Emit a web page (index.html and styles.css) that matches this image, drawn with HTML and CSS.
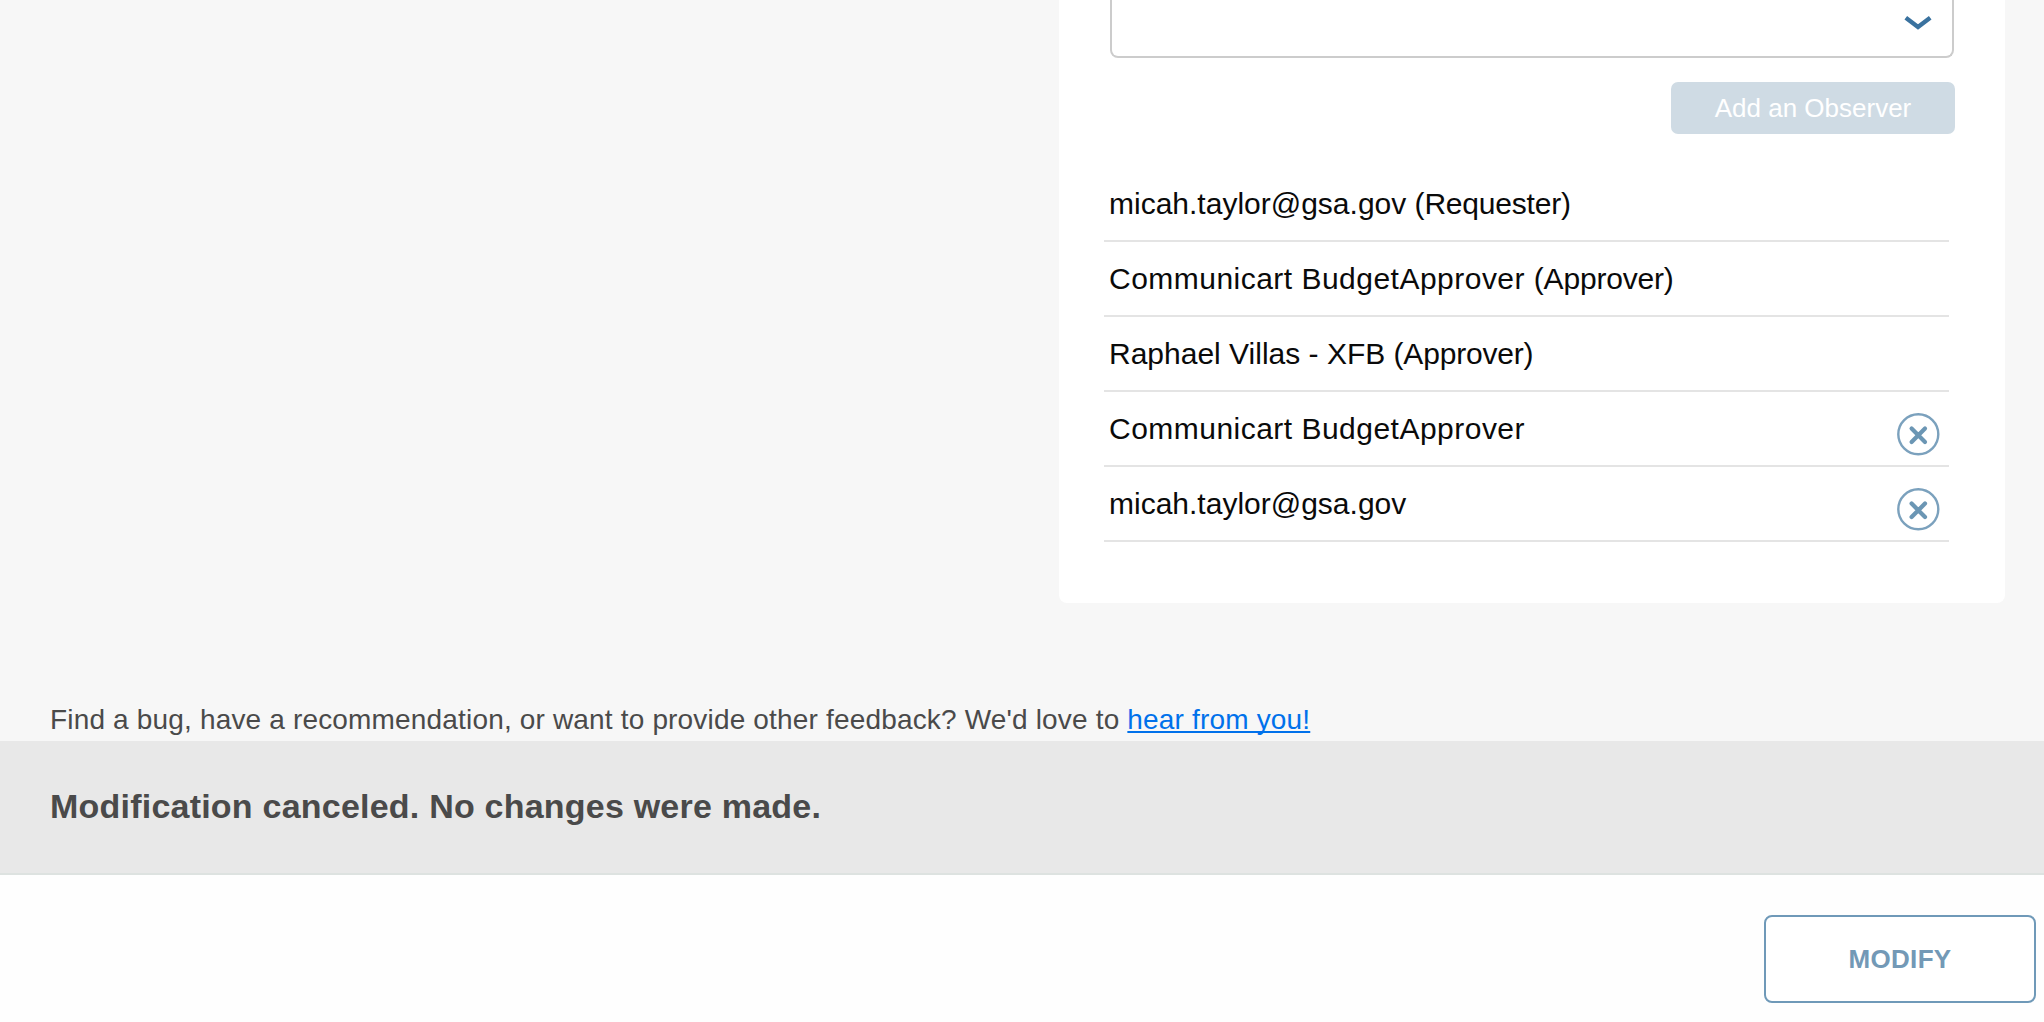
FILE: index.html
```html
<!DOCTYPE html>
<html lang="en">
<head>
<meta charset="utf-8">
<title>Request observers</title>
<link rel="stylesheet" href="styles.css">
</head>
<body>
<main class="content">
  <section class="card">
    <div class="select">
      <svg class="chevron" width="28" height="16" viewBox="0 0 28 16"><path d="M1.8 2.8 14 11.9 26.2 2.8" fill="none" stroke="#3a729f" stroke-width="4.4"/></svg>
    </div>
    <button class="add" type="button" disabled>Add an Observer</button>
    <ul class="observers">
      <li class="row"><span class="name">micah.taylor@gsa.gov <span class="role">(Requester)</span></span></li>
      <li class="row"><span class="name budget">Communicart BudgetApprover <span class="role">(Approver)</span></span></li>
      <li class="row"><span class="name">Raphael Villas - XFB <span class="role">(Approver)</span></span></li>
      <li class="row"><span class="name budget">Communicart BudgetApprover</span>
        <svg class="remove" width="44" height="44" viewBox="0 0 44 44"><circle cx="22.3" cy="22.3" r="20" fill="none" stroke="#7ba1bd" stroke-width="2.4"/><path d="m15.6 16.6 13.4 13.4m0-13.4L15.6 30" stroke="#6b96b4" stroke-width="4.2" stroke-linecap="round"/></svg></li>
      <li class="row"><span class="name">micah.taylor@gsa.gov</span>
        <svg class="remove" width="44" height="44" viewBox="0 0 44 44"><circle cx="22.3" cy="22.3" r="20" fill="none" stroke="#7ba1bd" stroke-width="2.4"/><path d="m15.6 16.6 13.4 13.4m0-13.4L15.6 30" stroke="#6b96b4" stroke-width="4.2" stroke-linecap="round"/></svg></li>
    </ul>
  </section>
  <p class="feedback">Find a bug, have a recommendation, or want to provide other feedback? We'd love to <a href="#">hear from you!</a></p>
</main>
<div class="notice">Modification canceled. No changes were made.</div>
<footer class="actions"><button class="modify" type="button">MODIFY</button></footer>
</body>
</html>
```
FILE: styles.css
```css
* { box-sizing: border-box; }
body {
  margin: 0;
  height: 1022px;
  overflow: hidden;
  display: flex;
  flex-direction: column;
  background: #fefefe;
  color: #4a4a4a;
  font-family: "Liberation Sans", Arial, sans-serif;
}
button { font-family: inherit; margin: 0; padding: 0; }
.content {
  height: 741px;
  flex: none;
  display: flex;
  flex-direction: column;
  background: #f7f7f7;
}
.card {
  width: 946px;
  height: 603px;
  margin-left: 1059px;
  padding: 0 50px 0 45px;
  display: flex;
  flex-direction: column;
  background: #fff;
  border-radius: 0 0 8px 8px;
}
.select {
  height: 58px;
  margin: 0 1px 0 6px;
  padding: 15px 20px 0 0;
  display: flex;
  justify-content: flex-end;
  border: 2px solid #ccc;
  border-top: 0;
  border-radius: 0 0 8px 8px;
}
.add {
  width: 284px;
  height: 52px;
  margin-top: 24px;
  align-self: flex-end;
  border: 0;
  border-radius: 7px;
  background: #cfdbe4;
  color: #fff;
  font-size: 26px;
}
.observers {
  list-style: none;
  margin: 33px 6px 0 0;
  padding: 0;
}
.row {
  height: 75px;
  padding: 0 9px 0 5px;
  display: flex;
  justify-content: space-between;
  border-bottom: 2px solid #e4e4e4;
  color: #0a0a0a;
  font-size: 30px;
  line-height: 74px;
}
.name { white-space: nowrap; }
.budget { letter-spacing: .48px; }
.role { letter-spacing: -.2px; }
.remove { margin-top: 20px; }
.feedback {
  margin: 97px 0 0 50px;
  font-size: 28px;
  letter-spacing: .17px;
  line-height: 40px;
  white-space: nowrap;
}
.feedback a { color: #0071eb; text-decoration-thickness: 2px; text-underline-offset: 2px; text-decoration-skip-ink: none; }
.notice {
  height: 134px;
  flex: none;
  padding-left: 50px;
  border-bottom: 2px solid #dde2e0;
  background: #e8e8e8;
  font-size: 34px;
  font-weight: 700;
  letter-spacing: .22px;
  line-height: 130px;
}
.actions {
  height: 147px;
  padding: 40px 8px 0;
  display: flex;
  justify-content: flex-end;
}
.modify {
  width: 272px;
  height: 88px;
  border: 2px solid #6f99b8;
  border-radius: 8px;
  background: #fff;
  color: #7399b6;
  font-size: 26px;
  font-weight: 700;
  letter-spacing: .3px;
}
```
